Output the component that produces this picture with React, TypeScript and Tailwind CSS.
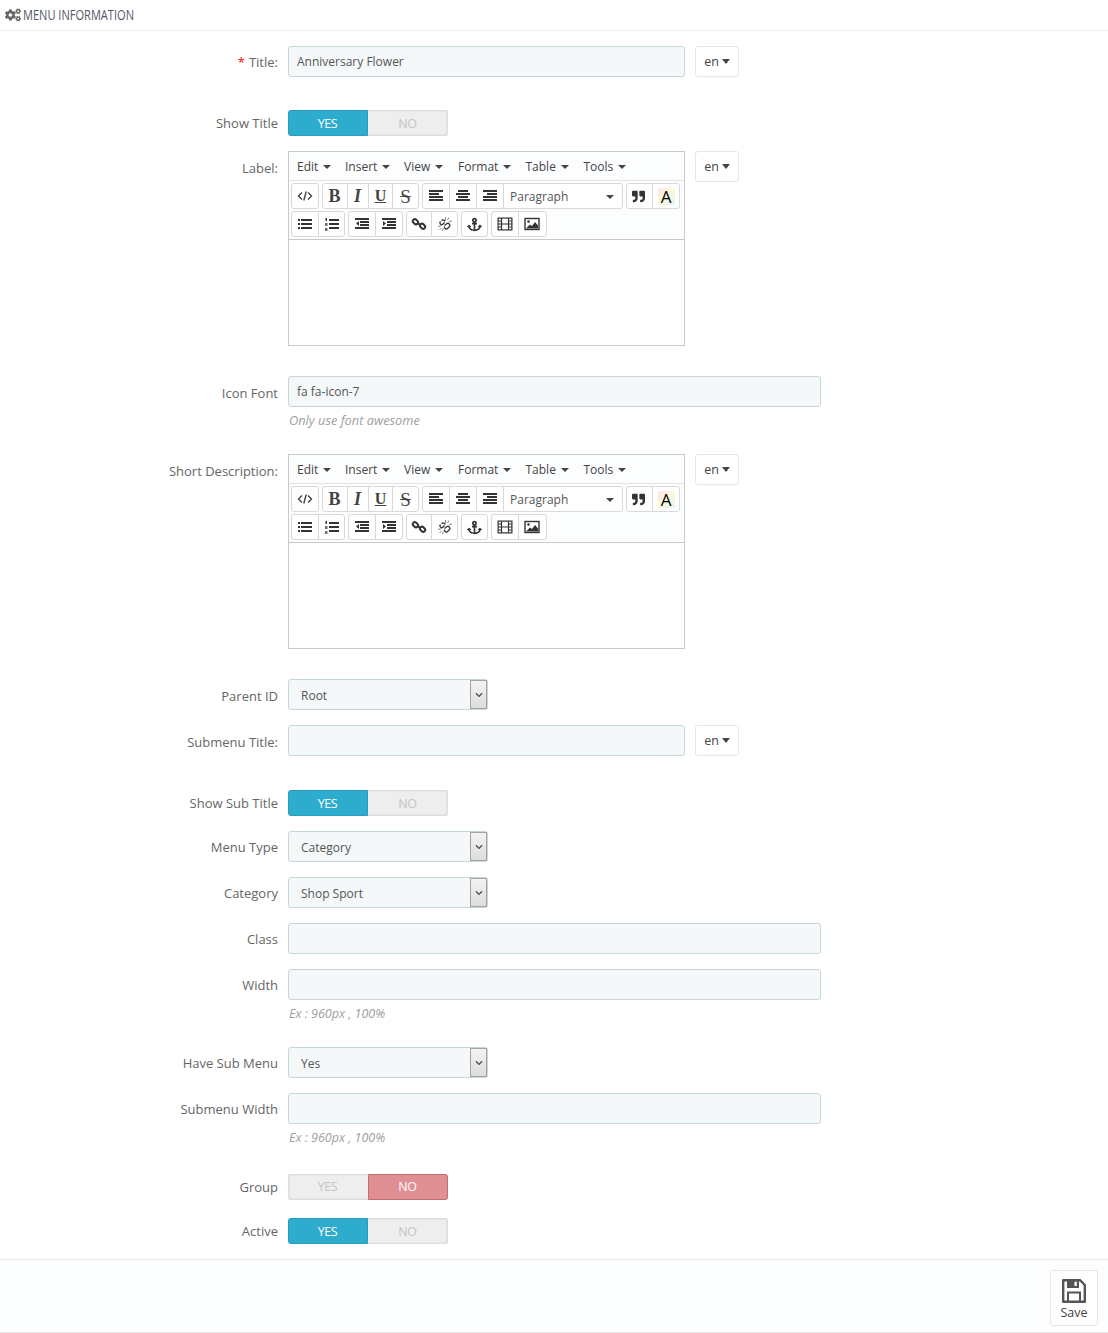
import React from "react";
import { FaCogs, FaAnchor, FaQuoteRight, FaChevronDown } from "react-icons/fa";

const Caret = ({ className = "" }: { className?: string }) => (
  <span className={"inline-block w-0 h-0 border-x-[4px] border-x-transparent border-t-[4px] border-t-[#444] " + className} />
);

const Row = ({ label, required, tight, className = "", toggle, children }: { label: string; required?: boolean; tight?: boolean; className?: string; toggle?: boolean; children: React.ReactNode }) => (
  <div className={"flex items-start " + className}>
    <label className={"w-[278px] shrink-0 text-right leading-[20px] text-[13px] text-[#666] " + (toggle ? "pt-[3px]" : required || tight ? "pt-[6px]" : "pt-[7px]")}>
      {required && <span className="text-[#f00] mr-[4px]">*</span>}
      {label}
    </label>
    <div className="ml-[10px] flex-1 flex items-start">{children}</div>
  </div>
);

const Input = ({ value = "", wide }: { value?: string; wide?: boolean }) => (
  <div className={"h-[31px] rounded-[3px] border border-[#c7d6db] bg-[#f5f8f9] px-[8px] leading-[29px] text-[12px] text-[#555] " + (wide ? "w-[533px]" : "w-[397px]")}>{value}</div>
);

const Lang = () => (
  <div className="ml-[10px] w-[44px] h-[31px] pt-[2px] rounded-[3px] border border-[#e6e6e6] bg-white flex items-center justify-center gap-[3px] text-[12.5px] text-[#444]">
    en <span className="inline-block w-0 h-0 border-x-[4.5px] border-x-transparent border-t-[5px] border-t-[#444] -mt-[2px]" />
  </div>
);

const Select = ({ value }: { value: string }) => (
  <div className="w-[200px] h-[31px] rounded-[3px] border border-[#c7d6db] bg-[#f5f8f9] flex text-[12px] text-[#555]">
    <div className="flex-1 pl-[12px] leading-[32px]">{value}</div>
    <div className="w-[17px] h-full border border-[#a3a3a3] bg-gradient-to-b from-[#f4f4f4] to-[#dcdcdc] flex items-center justify-center text-[#4a4a4a]">
      <FaChevronDown size={8} />
    </div>
  </div>
);

const Toggle = ({ on }: { on: boolean }) => (
  <div className="w-[160px] h-[26px] flex text-[12.5px] tracking-[-0.35px] text-center rounded-[3px] bg-[#eeeeee] shadow-[inset_0_0_3px_rgba(0,0,0,0.2)]">
    {on ? (
      <>
        <div className="w-[80px] rounded-l-[3px] bg-[#2eacce] border border-[#2a9dbc] text-white leading-[25px] pr-[1px]">YES</div>
        <div className="w-[80px] text-[#c4c4c4] leading-[27px] pr-[1px]">NO</div>
      </>
    ) : (
      <>
        <div className="w-[80px] text-[#c4c4c4] leading-[26px] pr-[1px]">YES</div>
        <div className="w-[80px] rounded-r-[3px] bg-[#e08f95] border border-[#c96c72] text-white leading-[24px] pr-[1px]">NO</div>
      </>
    )}
  </div>
);

const Btn = ({ w, children, last, className = "" }: { w: number; children: React.ReactNode; last?: boolean; className?: string }) => (
  <div style={{ width: w }} className={"h-full flex items-center justify-center text-[#333] " + (last ? "" : "border-r border-[#d9d9d9] ") + className}>{children}</div>
);

const Group = ({ children }: { children: React.ReactNode }) => (
  <div className="h-[26px] flex rounded-[3px] border border-[#d9d9d9] bg-white">{children}</div>
);

const Ico = ({ children }: { children: React.ReactNode }) => (
  <svg width="16" height="16" viewBox="0 0 16 16" fill="#333">{children}</svg>
);

const Bars = ({ bars }: { bars: [number, number, number][] }) => (
  <Ico>{bars.map(([x, y, w], i) => <rect key={i} x={x} y={y} width={w} height={2} />)}</Ico>
);

const LinkIcon = ({ broken }: { broken?: boolean }) => (
  <Ico>
    {broken ? (
      <g fill="none" stroke="#333" strokeWidth="1.5">
        <path d="M3.5 5.5 C1.8 7 4 9.5 5.5 8.5 L7.5 6.5" strokeWidth="1.3" />
        <path d="M4.5 4.5 C6 3 8 4.5 8 5.5" strokeWidth="1.3" />
        <path d="M7.5 9.5 L10 7.5 C11.5 6.5 14 9 12.5 10.5 L10.5 12.5 C9 14 7 12 7.5 10.5" strokeWidth="1.3" />
        <path d="M8.5 1v3M12 1.5l-1.5 2.5M15 5l-3 .8M1 10.5l3-.8M2.5 14l2-2.2M5.5 15l.8-2.5" strokeWidth="0.9" stroke="#777" />
      </g>
    ) : (
      <g fill="none" stroke="#333" strokeWidth="2">
        <rect x="1.6" y="3.7" width="5.6" height="4" rx="2" transform="rotate(45 4.4 5.7)" />
        <rect x="8.8" y="8.3" width="5.6" height="4" rx="2" transform="rotate(45 11.6 10.3)" />
        <path d="M6.5 6.9 L9.5 9.1" />
      </g>
    )}
  </Ico>
);

const serif = "font-['Liberation_Serif',serif] leading-none text-[#444]";

const MenuItem = ({ w, label }: { w: number; label: string }) => (
  <div style={{ width: w }} className="flex items-center gap-[5px] text-[12px] text-[#444]">
    {label} <Caret />
  </div>
);

const Editor = () => (
  <div className="w-[397px] h-[195px] border border-[#c9c9c9] bg-white flex flex-col">
    <div className="h-[29px] shrink-0 bg-[#fcfdfe] border-b border-[#e3e3e3] flex items-center pl-[8px] pt-[1px]">
      <MenuItem w={48} label="Edit" />
      <MenuItem w={59} label="Insert" />
      <MenuItem w={54} label="View" />
      <MenuItem w={67.5} label="Format" />
      <MenuItem w={58} label="Table" />
      <MenuItem w={50} label="Tools" />
    </div>
    <div className="h-[59px] shrink-0 bg-[#fcfdfe] border-b border-[#c9c9c9] pl-[2px] pt-[2px] flex flex-col gap-[2px]">
      <div className="flex gap-[3px]">
        <Group>
          <Btn w={26} last>
            <Ico>
              <g fill="none" stroke="#444" strokeWidth="1.4">
                <path d="M5 4.5 L1.5 8 L5 11.5M11 4.5 L14.5 8 L11 11.5M9.2 3.5 L6.8 12.5" />
              </g>
            </Ico>
          </Btn>
        </Group>
        <Group>
          <Btn w={25} className="pr-[1px]"><b className={serif + " text-[18px]"}>B</b></Btn>
          <Btn w={21} className="pr-[1px]"><i className={serif + " text-[18px] font-bold"}>I</i></Btn>
          <Btn w={24}><u className={serif + " text-[16px] font-bold"}>U</u></Btn>
          <Btn w={25} last><s className={serif + " text-[19px]"}>S</s></Btn>
        </Group>
        <Group>
          <Btn w={27}><Bars bars={[[1, 2, 14], [1, 5, 10], [1, 8, 14], [1, 11, 14]]} /></Btn>
          <Btn w={27}><Bars bars={[[3, 2, 10], [1, 5, 14], [3, 8, 10], [1, 11, 14]]} /></Btn>
          <Btn w={27}><Bars bars={[[1, 2, 14], [5, 5, 10], [1, 8, 14], [1, 11, 14]]} /></Btn>
          <div className="w-[118px] flex items-center justify-between pl-[6px] pr-[8px] pt-[1px] text-[12px] text-[#555]">
            Paragraph <Caret />
          </div>
        </Group>
        <Group>
          <Btn w={26} className="pr-[2px]"><FaQuoteRight size={13} /></Btn>
          <Btn w={26} last>
            <span className="w-[17px] h-[17px] flex items-center justify-center bg-[linear-gradient(135deg,#fbe3ea_0%,#fdf9dc_45%,#dff6f2_100%)] text-[17px] font-medium leading-none text-black">A</span>
          </Btn>
        </Group>
      </div>
      <div className="flex gap-[3px]">
        <Group>
          <Btn w={27}>
            <Ico>
              <rect x="1" y="3" width="2" height="2" /><rect x="1" y="7" width="2" height="2" /><rect x="1" y="11" width="2" height="2" />
              <rect x="4" y="3" width="11" height="2" /><rect x="4" y="7" width="11" height="2" /><rect x="4" y="11" width="11" height="2" />
            </Ico>
          </Btn>
          <Btn w={25} last>
            <Ico>
              <rect x="1.5" y="2" width="1.5" height="3" /><rect x="1" y="7" width="2.5" height="3" opacity=".7" /><rect x="1" y="12" width="2.5" height="3" opacity=".7" />
              <rect x="5" y="3" width="10" height="2" /><rect x="5" y="7" width="10" height="2" /><rect x="5" y="11" width="10" height="2" />
            </Ico>
          </Btn>
        </Group>
        <Group>
          <Btn w={27}>
            <Ico>
              <rect x="1" y="2" width="14" height="2" /><rect x="6" y="5" width="9" height="2" /><rect x="6" y="8" width="9" height="2" /><rect x="1" y="11" width="14" height="2" />
              <path d="M5 5 L2 7.5 L5 10 Z" />
            </Ico>
          </Btn>
          <Btn w={26} last>
            <Ico>
              <rect x="1" y="2" width="14" height="2" /><rect x="6" y="5" width="9" height="2" /><rect x="6" y="8" width="9" height="2" /><rect x="1" y="11" width="14" height="2" />
              <path d="M2 5 L5 7.5 L2 10 Z" />
            </Ico>
          </Btn>
        </Group>
        <Group>
          <Btn w={25} className="pr-[1px]"><LinkIcon /></Btn>
          <Btn w={25} last><LinkIcon broken /></Btn>
        </Group>
        <Group><Btn w={25} last className="pr-[1px]"><FaAnchor size={15} /></Btn></Group>
        <Group>
          <Btn w={27} className="pr-[1px]">
            <Ico>
              <g fill="none" stroke="#333" strokeWidth="1.2">
                <rect x="1.1" y="2.1" width="13.8" height="11.8" />
                <path d="M4.5 2v12M11.5 2v12M4.5 8h7M1 5h3.5M1 8h3.5M1 11h3.5M11.5 5H15M11.5 8H15M11.5 11H15" />
              </g>
            </Ico>
          </Btn>
          <Btn w={27} last className="pr-[1px]">
            <Ico>
              <rect x="1" y="2.5" width="14" height="11" fill="none" stroke="#333" strokeWidth="1.4" />
              <circle cx="4.5" cy="5.5" r="1.3" />
              <path d="M2 12.5 L6 8.5 L8 10 L11 6 L14 9.5 V12.5 Z" />
            </Ico>
          </Btn>
        </Group>
      </div>
    </div>
    <div className="flex-1" />
  </div>
);

const Help = ({ children, small }: { children: React.ReactNode; small?: boolean }) => (
  <p className={"ml-[289px] h-[17px] leading-[16px] italic text-[#a0a0a0] " + (small ? "mt-[6px] -mb-[1px] text-[12.5px]" : "mt-[5px] text-[12.8px]")}>{children}</p>
);

export default function App() {
  return (
    <div className="w-[1108px] h-[1333px] bg-white font-['Open_Sans',sans-serif]">
      <div className="h-[31px] border-b border-[#eeeeee] flex items-center pl-[5px] pb-[1px] text-[#666]">
        <FaCogs size={16} />
        <span className="ml-[2px] -mt-[1px] inline-block origin-left scale-x-[0.79] text-[14px] uppercase whitespace-nowrap text-[#556]">Menu Information</span>
      </div>

      <Row label="Title:" required className="mt-[15px]"><Input value="Anniversary Flower" /><Lang /></Row>
      <Row label="Show Title" toggle className="mt-[33px]"><Toggle on /></Row>
      <Row label="Label:" className="mt-[15px]"><Editor /><Lang /></Row>
      <Row label="Icon Font" className="mt-[30px]"><Input value="fa fa-icon-7" wide /></Row>
      <Help>Only use font awesome</Help>
      <Row label="Short Description:" className="mt-[25px]"><Editor /><Lang /></Row>
      <Row label="Parent ID" className="mt-[30px]"><Select value="Root" /></Row>
      <Row label="Submenu Title:" className="mt-[15px]"><Input /><Lang /></Row>
      <Row label="Show Sub Title" toggle className="mt-[34px]"><Toggle on /></Row>
      <Row label="Menu Type" tight className="mt-[15px]"><Select value="Category" /></Row>
      <Row label="Category" tight className="mt-[15px]"><Select value="Shop Sport" /></Row>
      <Row label="Class" tight className="mt-[15px]"><Input wide /></Row>
      <Row label="Width" tight className="mt-[15px]"><Input wide /></Row>
      <Help small>Ex : 960px , 100%</Help>
      <Row label="Have Sub Menu" tight className="mt-[25px]"><Select value="Yes" /></Row>
      <Row label="Submenu Width" tight className="mt-[15px]"><Input wide /></Row>
      <Help small>Ex : 960px , 100%</Help>
      <Row label="Group" toggle className="mt-[28px]"><Toggle on={false} /></Row>
      <Row label="Active" toggle className="mt-[18px]"><Toggle on /></Row>

      <div className="mt-[15px] h-[74px] bg-[#fcfdfe] border-y border-[#e6e6e6] flex justify-end items-start pr-[10px] pt-[10px]">
        <div className="w-[48px] h-[56px] rounded-[3px] border border-[#e6e6e6] bg-white flex flex-col items-center pt-[7px] text-[12.5px] leading-[16px] text-[#444]">
          <svg width="26" height="26" viewBox="0 0 26 26">
            <path d="M2.2 2.2 H19 L23.8 7 V23.8 H2.2 Z" fill="none" stroke="#555" strokeWidth="2.4" strokeLinejoin="round" />
            <path d="M6 2 H18 V10 H6 Z M13.5 3.5 V8 H15.8 V3.5 Z" fill="#555" fillRule="evenodd" />
            <path d="M7 23 V14.5 H19 V23" fill="none" stroke="#555" strokeWidth="2" />
          </svg>
          <span className="mt-[1px]">Save</span>
        </div>
      </div>
    </div>
  );
}
